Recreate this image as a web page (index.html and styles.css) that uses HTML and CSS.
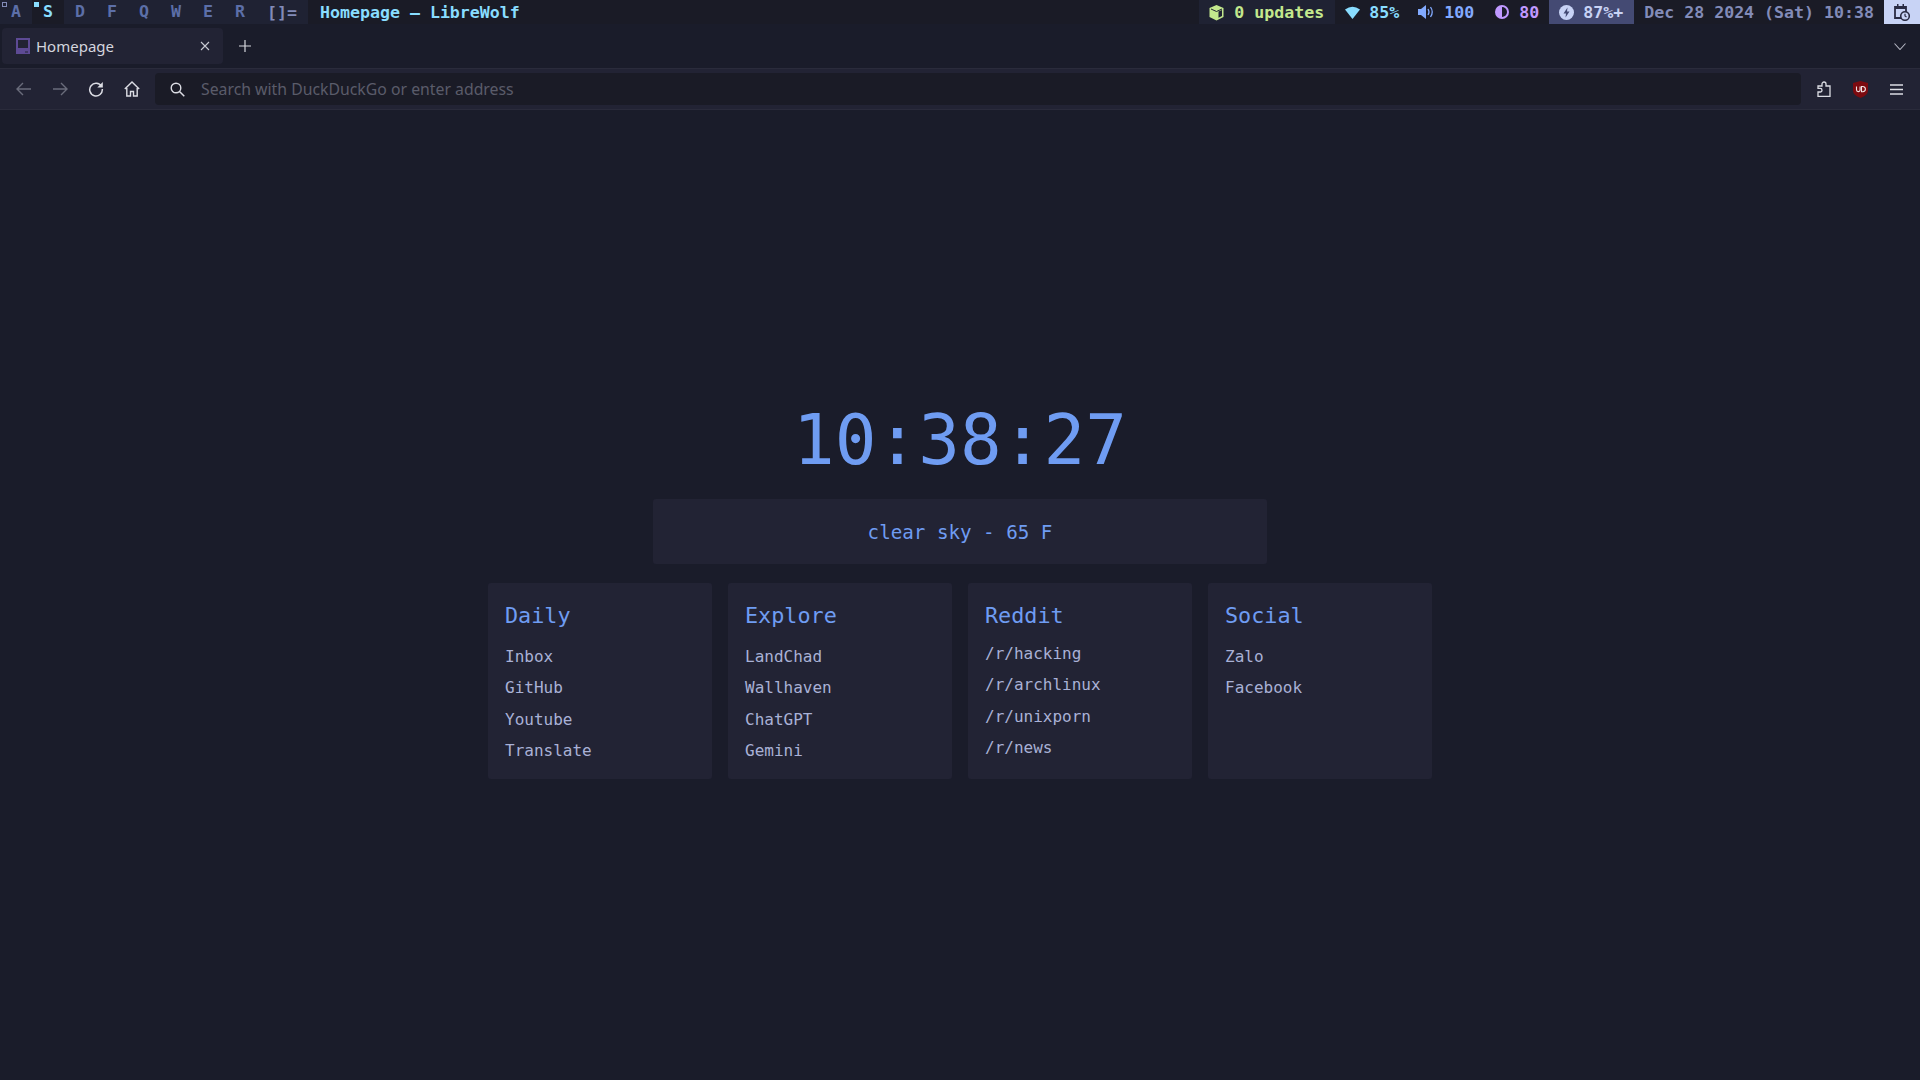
FILE: index.html
```html
<!DOCTYPE html>
<html lang="en">
<head>
    <meta charset="UTF-8">
    <meta name="viewport" content="width=device-width, initial-scale=1.0">
    <title>Homepage — LibreWolf</title>
    <link rel="stylesheet" href="styles.css">
</head>
<body>
    <div class="status-bar">
        <div class="tags">
            <div class="tag occupied">A</div>
            <div class="tag active">S</div>
            <div class="tag">D</div>
            <div class="tag">F</div>
            <div class="tag">Q</div>
            <div class="tag">W</div>
            <div class="tag">E</div>
            <div class="tag">R</div>
            <div class="layout">[]=</div>
        </div>
        <div class="window-title">Homepage — LibreWolf</div>
        <div class="status-items">
            <div class="status updates">
                <svg width="17" height="17" viewBox="0 0 17 17"><path d="M8.5 1 15.5 4v9l-7 3.500-7-3.500V4z" fill="#c3e88d"/><path d="M10.500 7.500 14 6v6l-3.500 1.800z" fill="#1f2233"/><path d="M3 5l5.500 2.500L14 5" fill="none" stroke="#1f2233" stroke-width="1"/></svg>
                <span>0 updates</span>
            </div>
            <div class="status wifi">
                <svg width="15" height="13" viewBox="0 0 15 13"><path d="M0 3.500Q7.500-2 15 3.500L7.500 13z" fill="#89ddff"/></svg>
                <span>85%</span>
            </div>
            <div class="status volume">
                <svg width="17" height="14" viewBox="0 0 17 14"><path d="M0 4h3l5-4v14l-5-4H0z" fill="#82aaff"/><path d="M10 4q2 3 0 6M12.500 2q3.500 5 0 10" fill="none" stroke="#82aaff" stroke-width="1.300"/></svg>
                <span>100</span>
            </div>
            <div class="status brightness">
                <svg width="16" height="16" viewBox="0 0 16 16"><circle cx="8" cy="8" r="7" fill="#c099ff"/><path d="M8 3a5 5 0 0 1 0 10z" fill="#1a1b2a"/></svg>
                <span>80</span>
            </div>
            <div class="status battery">
                <svg width="15" height="15" viewBox="0 0 15 15"><circle cx="7.500" cy="7.500" r="7.500" fill="#c8d3f5"/><path d="M8.500 2.500 4.500 8.500h2.500L6.500 12.500l4-6H8z" fill="#444a73"/></svg>
                <span>87%+</span>
            </div>
            <div class="status clock-text">Dec 28 2024 (Sat) 10:38</div>
            <div class="calendar">
                <svg width="16" height="18" viewBox="0 0 16 18"><path d="M1 4h11v11H1z" fill="none" stroke="#2a2c44" stroke-width="1.800"/><path d="M1 3h11v3H1zM3 1h1.500v3H3zM8.500 1H10v3H8.500z" fill="#2a2c44"/><circle cx="11" cy="13" r="4.300" fill="#c8d3f5" stroke="#2a2c44" stroke-width="1.600"/><path d="M11 10.800V13l1.500 1" fill="none" stroke="#2a2c44" stroke-width="1.200"/></svg>
            </div>
        </div>
    </div>

    <div class="tab-row">
        <div class="tab">
            <svg width="14" height="16" viewBox="0 0 14 16"><path d="M1 1h12v10H1z" fill="none" stroke="#5d4a94" stroke-width="2"/><path d="M0 12h14v4H0z" fill="#5d4a94"/><path d="M9 13.500h3v1H9z" fill="#222334"/></svg>
            <span class="tab-title">Homepage</span>
            <svg class="tab-close" width="10" height="10" viewBox="0 0 10 10"><path d="M1 1l8 8M9 1l-8 8" stroke="#c9cad3" stroke-width="1.100"/></svg>
        </div>
        <div class="new-tab">
            <svg width="12" height="12" viewBox="0 0 12 12"><path d="M6 0v12M0 6h12" stroke="#d6d7de" stroke-width="1.200"/></svg>
        </div>
        <div class="tab-list">
            <svg width="12" height="7" viewBox="0 0 12 7"><path d="M.5.500l5.500 6 5.500-6" fill="none" stroke="#b4b6c2" stroke-width="1.100"/></svg>
        </div>
    </div>

    <div class="toolbar">
        <div class="tool-btn">
            <svg width="16" height="14" viewBox="0 0 16 14"><path d="M15 7H1.500M7 1 1 7l6 6" fill="none" stroke="#6a6c7b" stroke-width="1.400"/></svg>
        </div>
        <div class="tool-btn">
            <svg width="16" height="14" viewBox="0 0 16 14"><path d="M1 7h13.500M9 1l6 6-6 6" fill="none" stroke="#6a6c7b" stroke-width="1.400"/></svg>
        </div>
        <div class="tool-btn">
            <svg width="16" height="16" viewBox="0 0 16 16"><path d="M13.500 5.500A6.300 6.300 0 1 0 14.300 8" fill="none" stroke="#dcdde4" stroke-width="1.500"/><path d="M14.800 1v5.500H9.300z" fill="#dcdde4"/></svg>
        </div>
        <div class="tool-btn">
            <svg width="16" height="16" viewBox="0 0 16 16"><path d="M.8 8 8 1l7.200 7M2.800 7v8h3.700v-4.500h3V15h3.700V7" fill="none" stroke="#dcdde4" stroke-width="1.400"/></svg>
        </div>
        <div class="url-bar">
            <svg width="15" height="15" viewBox="0 0 15 15"><circle cx="6" cy="6" r="4.800" fill="none" stroke="#dcdde4" stroke-width="1.400"/><path d="M9.500 9.500 14.300 14.300" stroke="#dcdde4" stroke-width="1.500"/></svg>
            <span class="url-text">Search with DuckDuckGo or enter address</span>
        </div>
        <div class="tool-btn">
            <svg width="14" height="16" viewBox="0 0 14 16"><path d="M1 15.300V11h2.200a1.500 1.500 0 0 0 0-3.600H1V5h4V3a2 2 0 0 1 4 0v2h4v10.300z" fill="none" stroke="#dcdde4" stroke-width="1.300"/></svg>
        </div>
        <div class="tool-btn">
            <svg width="15" height="17" viewBox="0 0 15 17"><path d="M7.500 0 15 2v7.500q0 4.500-7.500 7.500Q0 14 0 9.500V2z" fill="#7c0b10"/><path d="M3.500 5.500v3.300a1.800 1.800 0 0 0 3.600 0V5.500" fill="none" stroke="#f2e4e4" stroke-width="1.100"/><path d="M8.500 5.500h1.300a2.100 2.100 0 0 1 0 5.200H8.500z" fill="none" stroke="#f2e4e4" stroke-width="1.100"/></svg>
        </div>
        <div class="tool-btn">
            <svg width="13" height="11" viewBox="0 0 13 11"><path d="M0 1h13M0 5.500h13M0 10h13" stroke="#dcdde4" stroke-width="1.300"/></svg>
        </div>
    </div>

    <div class="page">
        <div class="clock">10:38:27</div>
        <div class="weather">clear sky - 65 F</div>
        <div class="cards">
            <div class="card">
                <h2>Daily</h2>
                <a>Inbox</a>
                <a>GitHub</a>
                <a>Youtube</a>
                <a>Translate</a>
            </div>
            <div class="card">
                <h2>Explore</h2>
                <a>LandChad</a>
                <a>Wallhaven</a>
                <a>ChatGPT</a>
                <a>Gemini</a>
            </div>
            <div class="card reddit">
                <h2>Reddit</h2>
                <a>/r/hacking</a>
                <a>/r/archlinux</a>
                <a>/r/unixporn</a>
                <a>/r/news</a>
            </div>
            <div class="card">
                <h2>Social</h2>
                <a>Zalo</a>
                <a>Facebook</a>
            </div>
        </div>
    </div>
</body>
</html>
```

FILE: styles.css
```css
body {
    margin: 0;
    width: 1920px;
    height: 1080px;
    overflow: hidden;
    display: flex;
    flex-direction: column;
    background-color: #1a1c2a;
    font-family: "DejaVu Sans Mono", monospace;
}
svg {
    display: block;
    flex-shrink: 0;
}

/* status bar */
.status-bar {
    height: 24px;
    display: flex;
    align-items: center;
    font-size: 16.6px;
    font-weight: bold;
    background-color: #1a1b26;
}
.tags {
    width: 308px;
    height: 24px;
    display: flex;
    align-items: center;
    background-color: #1f2233;
    color: #5c6fa8;
}
.tag {
    position: relative;
    width: 32px;
    height: 24px;
    line-height: 24px;
    text-align: center;
}
.tag.active {
    background-color: #1a1b26;
    color: #89ddff;
}
.tag.occupied::before, .tag.active::before {
    content: "";
    position: absolute;
    top: 2px;
    left: 2px;
    width: 5px;
    height: 5px;
}
.tag.occupied::before {
    width: 3px;
    height: 3px;
    border: 1px solid #828bb8;
}
.tag.active::before {
    background-color: #89ddff;
}
.layout {
    margin-left: 11px;
    color: #828bb8;
}
.window-title {
    margin-left: 12px;
    color: #89ddff;
}
.status-items {
    margin-left: auto;
    display: flex;
    align-items: center;
    height: 24px;
}
.status {
    height: 24px;
    display: flex;
    align-items: center;
    gap: 9px;
    white-space: nowrap;
}
.updates {
    width: 136px;
    padding-left: 9px;
    box-sizing: border-box;
    background-color: #1f2233;
    color: #c3e88d;
}
.wifi {
    margin-left: 10px;
    color: #89ddff;
}
.volume {
    margin-left: 19px;
    color: #82aaff;
}
.brightness {
    margin-left: 20px;
    color: #c099ff;
}
.battery {
    margin-left: 10px;
    width: 85px;
    padding-left: 10px;
    box-sizing: border-box;
    background-color: #444a73;
    color: #c8d3f5;
}
.clock-text {
    margin-left: 10px;
    color: #828bb8;
}
.calendar {
    margin-left: 10px;
    width: 36px;
    height: 24px;
    display: flex;
    align-items: center;
    justify-content: center;
    background-color: #c8d3f5;
}

/* tabs */
.tab-row {
    height: 44px;
    display: flex;
    align-items: center;
    padding-left: 2px;
    box-sizing: border-box;
    font-family: "Noto Sans", sans-serif;
}
.tab {
    width: 221px;
    height: 36px;
    display: flex;
    align-items: center;
    padding: 0 13px 0 14px;
    box-sizing: border-box;
    border-radius: 4px;
    background-color: #222334;
}
.tab-title {
    margin-left: 6px;
    font-size: 15px;
    color: #d4d5de;
}
.tab-close {
    margin-left: auto;
}
.new-tab {
    margin-left: 16px;
}
.tab-list {
    margin-left: auto;
    margin-right: 14px;
}

/* toolbar */
.toolbar {
    height: 42px;
    display: flex;
    align-items: center;
    padding: 0 6px;
    box-sizing: border-box;
    border-top: 1px solid #2a2b3b;
    border-bottom: 1px solid #2a2b3b;
    background-color: #222334;
    font-family: "Noto Sans", sans-serif;
}
.tool-btn {
    width: 36px;
    height: 32px;
    display: flex;
    align-items: center;
    justify-content: center;
}
.url-bar {
    flex: 1;
    height: 32px;
    margin: 0 5px 0 5px;
    display: flex;
    align-items: center;
    padding-left: 15px;
    border-radius: 4px;
    background-color: #1a1b26;
}
.url-text {
    margin-left: 16px;
    font-size: 15.8px;
    color: #5a5c6a;
}

/* page */
.page {
    flex: 1;
    display: flex;
    flex-direction: column;
    align-items: center;
    justify-content: center;
}
.clock {
    height: 72px;
    line-height: 58px;
    margin-bottom: 16px;
    font-size: 69.3px;
    color: #6f9cf2;
}
.weather {
    width: 614px;
    height: 65px;
    line-height: 67px;
    margin-bottom: 19px;
    border-radius: 3px;
    text-align: center;
    font-size: 19.2px;
    color: #6f9cf2;
    background-color: #222334;
}
.cards {
    display: flex;
    gap: 16px;
}
.card {
    width: 224px;
    height: 196px;
    padding: 16px 16px 16px 17px;
    box-sizing: border-box;
    display: flex;
    flex-direction: column;
    border-radius: 3px;
    background-color: #222334;
}
.card h2 {
    margin: 0 0 9px;
    height: 33px;
    line-height: 33px;
    font-size: 21.8px;
    font-weight: normal;
    color: #6f9cf2;
}
.card a {
    height: 31.300px;
    line-height: 31.300px;
    font-size: 16px;
    color: #a9b1d6;
}
.reddit h2 {
    margin-bottom: 6px;
}
```
